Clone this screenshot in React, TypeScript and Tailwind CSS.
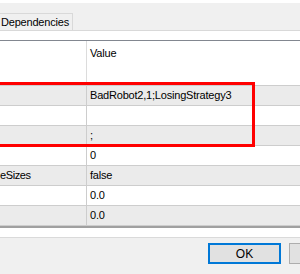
export default function App() {
  const rows = [
    { name: "", value: "BadRobot2,1;LosingStrategy3" },
    { name: "", value: "" },
    { name: "", value: ";" },
    { name: "", value: "0" },
    { name: "eSizes", value: "false" },
    { name: "", value: "0.0" },
    { name: "", value: "0.0" },
  ];
  return (
    <div className="relative w-[300px] h-[274px] overflow-hidden bg-[#f0f0f0] text-[11px] tracking-[-0.2px] text-black font-['Liberation_Sans',Arial,sans-serif]">
      <div className="h-[3px] bg-white" />
      <div className="h-[28px] bg-[#f0f0f0] border-b border-[#d9d9d9] flex items-end">
        <div className="w-[73px] h-[17px] border-t border-r border-[#d9d9d9] pl-[1px] leading-[16px] whitespace-nowrap">
          Dependencies
        </div>
      </div>
      <div className="h-[9px] bg-white" />
      <div className="border-t border-[#828790] bg-white">
        <div className="h-[44px] flex">
          <div className="w-[87px] shrink-0 border-r border-[#dcdcdc]" />
          <div className="pl-[3px] pt-[6px] leading-[13px]">Value</div>
        </div>
        {rows.map((r, i) => (
          <div
            key={i}
            className={`h-[20px] flex border-t border-[#cdcdcd] ${i % 2 === 0 ? "bg-[#ebebeb]" : "bg-white"}`}
          >
            <div className="w-[87px] shrink-0 border-r border-[#cdcdcd] flex items-center whitespace-nowrap overflow-hidden">
              {r.name && <span className="tracking-[-0.4px]">{r.name}</span>}
            </div>
            <div className="pl-[3px] flex items-center whitespace-nowrap">{r.value}</div>
          </div>
        ))}
        <div className="h-[1px] bg-[#cdcdcd]" />
        <div className="h-[2px] bg-[#a0a0a0]" />
        <div className="h-[9px] bg-white" />
      </div>
      <div className="h-[1px] bg-[#dadada]" />
      <div className="flex gap-[8px] pl-[208px] pt-[5px]">
        <div className="w-[73px] h-[21px] shrink-0 border-2 border-[#0078d7] bg-[#e1e1e1] flex items-center justify-center text-[12px] tracking-normal">
          OK
        </div>
        <div className="w-[73px] h-[21px] shrink-0 border border-[#adadad] bg-[#e1e1e1]" />
      </div>
      <div className="absolute left-[-3px] top-[82px] w-[258px] h-[65px] border-[3px] border-[#ff0000]" />
    </div>
  );
}
